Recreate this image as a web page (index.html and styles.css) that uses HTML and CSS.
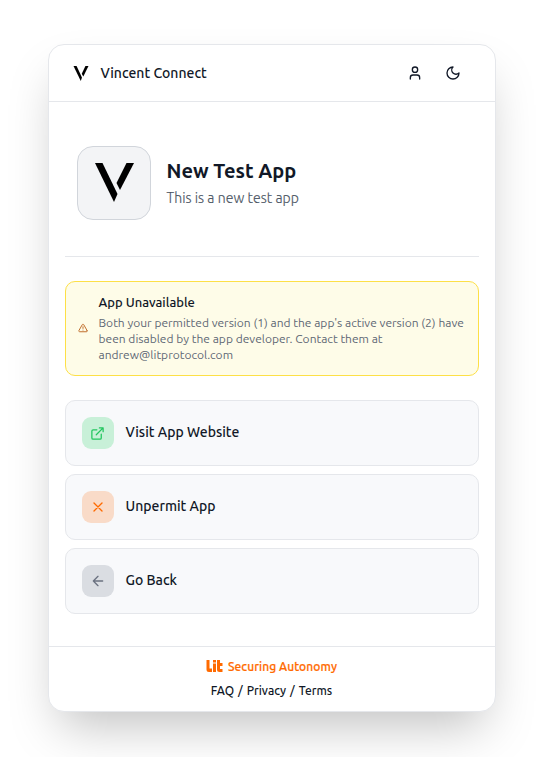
FILE: index.html
```html
<!DOCTYPE html>
<html lang="en">
<head>
<meta charset="utf-8">
<title>Vincent Connect</title>
<link rel="stylesheet" href="styles.css">
</head>
<body>
<main class="card">
  <header class="header">
    <svg class="brand-mark" viewBox="0 0 39 39"><path d="M0 0H8L22 30L19 39Z"/><path d="M31 0H39L25.500 27L21.500 20Z"/></svg>
    <span class="brand">Vincent Connect</span>
    <div class="actions">
      <svg class="icon" viewBox="0 0 24 24"><path d="M19 21v-2a4 4 0 0 0-4-4H9a4 4 0 0 0-4 4v2"/><circle cx="12" cy="7" r="4"/></svg>
      <svg class="icon" viewBox="0 0 24 24"><path d="M12 3a6 6 0 0 0 9 9 9 9 0 1 1-9-9Z"/></svg>
    </div>
  </header>
  <section class="app">
    <div class="app-logo"><svg viewBox="0 0 39 39"><path d="M0 0H7.500L22.500 31L19 39Z"/><path d="M31.500 0H39L25 27L21.500 20Z"/></svg></div>
    <div class="app-text">
      <h1>New Test App</h1>
      <p>This is a new test app</p>
    </div>
  </section>
  <section class="content">
    <div class="alert">
      <svg class="alert-icon" viewBox="0 0 24 24"><path d="m21.730 18-8-14a2 2 0 0 0-3.480 0l-8 14A2 2 0 0 0 4 21h16a2 2 0 0 0 1.730-3"/><path d="M12 9v4M12 17h.01"/></svg>
      <div class="alert-body">
        <h2>App Unavailable</h2>
        <p>Both your permitted version (1) and the app's active version (2) have been disabled by the app developer. Contact them at andrew@litprotocol.com</p>
      </div>
    </div>
    <nav class="options">
      <a class="option green"><i><svg viewBox="0 0 24 24"><path d="M15 3h6v6M10 14 21 3M18 13v6a2 2 0 0 1-2 2H5a2 2 0 0 1-2-2V8a2 2 0 0 1 2-2h6"/></svg></i><span>Visit App Website</span></a>
      <a class="option orange"><i><svg viewBox="0 0 24 24"><path d="M18 6 6 18M6 6l12 12"/></svg></i><span>Unpermit App</span></a>
      <a class="option gray"><i><svg viewBox="0 0 24 24"><path d="m12 19-7-7 7-7M19 12H5"/></svg></i><span>Go Back</span></a>
    </nav>
  </section>
  <footer class="footer">
    <div class="tagline"><svg class="lit" viewBox="0 0 16 12"><path d="M0 0H3V8.500H5.500V12H2.500Q0 12 0 9.500Z"/><path d="M6.500 0H9.500V2.500H6.500ZM6.500 3.500H9.500V12H6.500Z"/><path d="M10.500 0H13.500V3H16V6H13.500V9H16V12H13Q10.500 12 10.500 9.500Z"/></svg><span>Securing Autonomy</span></div>
    <div class="links"><span>FAQ</span><span>/</span><span>Privacy</span><span>/</span><span>Terms</span></div>
  </footer>
</main>
</body>
</html>
```
FILE: styles.css
```css
* { box-sizing: border-box; }
body { margin: 0; padding: 44px 0 0 47.5px; min-height: 757px; background: #fff; color: #111827; font-family: Ubuntu, "Noto Sans", sans-serif; }
h1, h2, p { margin: 0; }
svg { display: block; fill: none; stroke: currentColor; stroke-width: 2; stroke-linecap: round; stroke-linejoin: round; }
.card { width: 448px; height: 668px; border: 1px solid #e5e7eb; border-radius: 16px; background: #fff; box-shadow: 0 25px 50px -12px rgba(0,0,0,.25); display: flex; flex-direction: column; }
.header { height: 57px; flex: none; border-bottom: 1px solid #e5e7eb; display: flex; align-items: center; padding: 0 34px 0 24px; }
.brand-mark { width: 16px; height: 15px; margin-right: 12px; }
.brand-mark, .app-logo svg { fill: #000; stroke: none; }
.brand { font-size: 14px; font-weight: 500; }
.actions { margin-left: auto; display: flex; gap: 22px; }
.icon { width: 16px; height: 16px; }
.app { height: 155px; flex: none; margin: 0 16px; padding: 44px 12px 0; border-bottom: 1px solid #e5e7eb; display: flex; gap: 16px; }
.app-logo { width: 74px; height: 74px; border: 1px solid #d1d5db; border-radius: 16px; background: #f3f4f6; display: grid; place-items: center; }
.app-logo svg { width: 39px; height: 39px; margin: -1px 0 0 1px; }
.app-text { padding-top: 11px; }
h1 { font-size: 20px; line-height: 28px; font-weight: 600; }
.app-text p { font-size: 14px; line-height: 20px; margin-top: 3px; color: #4b5563; font-weight: 300; letter-spacing: .05px; -webkit-text-stroke: .15px #4b5563; }
.content { padding: 24px 16px 0; flex: 1; }
.alert { height: 95px; border: 1px solid #fde047; border-radius: 10px; background: #fefce8; display: flex; align-items: center; padding: 0 12px; }
.alert-icon { width: 10px; height: 10px; flex: none; color: #b45309; margin: -2px 11px 0 0; }
.alert-body { margin-top: -2px; }
h2 { font-size: 13px; line-height: 20px; font-weight: 500; }
.alert p { font-size: 12px; line-height: 16px; color: #5f6875; margin-top: 3px; }
.options { display: grid; gap: 8px; margin-top: 24px; }
.option { height: 66px; border: 1px solid #e5e7eb; border-radius: 10px; background: #f8f9fb; display: flex; align-items: center; padding-left: 16px; gap: 12px; font-size: 14px; font-weight: 500; }
.option span { margin-top: -3px; }
.option i { width: 32px; height: 32px; border-radius: 9px; display: grid; place-items: center; }
.option svg { width: 16px; height: 16px; }
.green svg { width: 15px; height: 15px; }
.green i { background: #c8f0d8; color: #22c55e; }
.orange i { background: #f9dbc8; color: #ff6a00; }
.gray i { background: #dadde2; color: #6b7280; }
.footer { height: 65px; flex: none; border-top: 1px solid #e5e7eb; display: flex; flex-direction: column; align-items: center; padding-top: 12px; font-size: 12px; line-height: 16px; font-weight: 500; }
.tagline { display: flex; gap: 5px; color: #ff6a00; }
.tagline span { letter-spacing: .08px; -webkit-text-stroke: .2px #ff6a00; }
.lit { width: 17px; height: 12px; margin-top: 1px; fill: #ff6a00; stroke: none; }
.links { margin-top: 8px; display: flex; gap: 4px; }
```
